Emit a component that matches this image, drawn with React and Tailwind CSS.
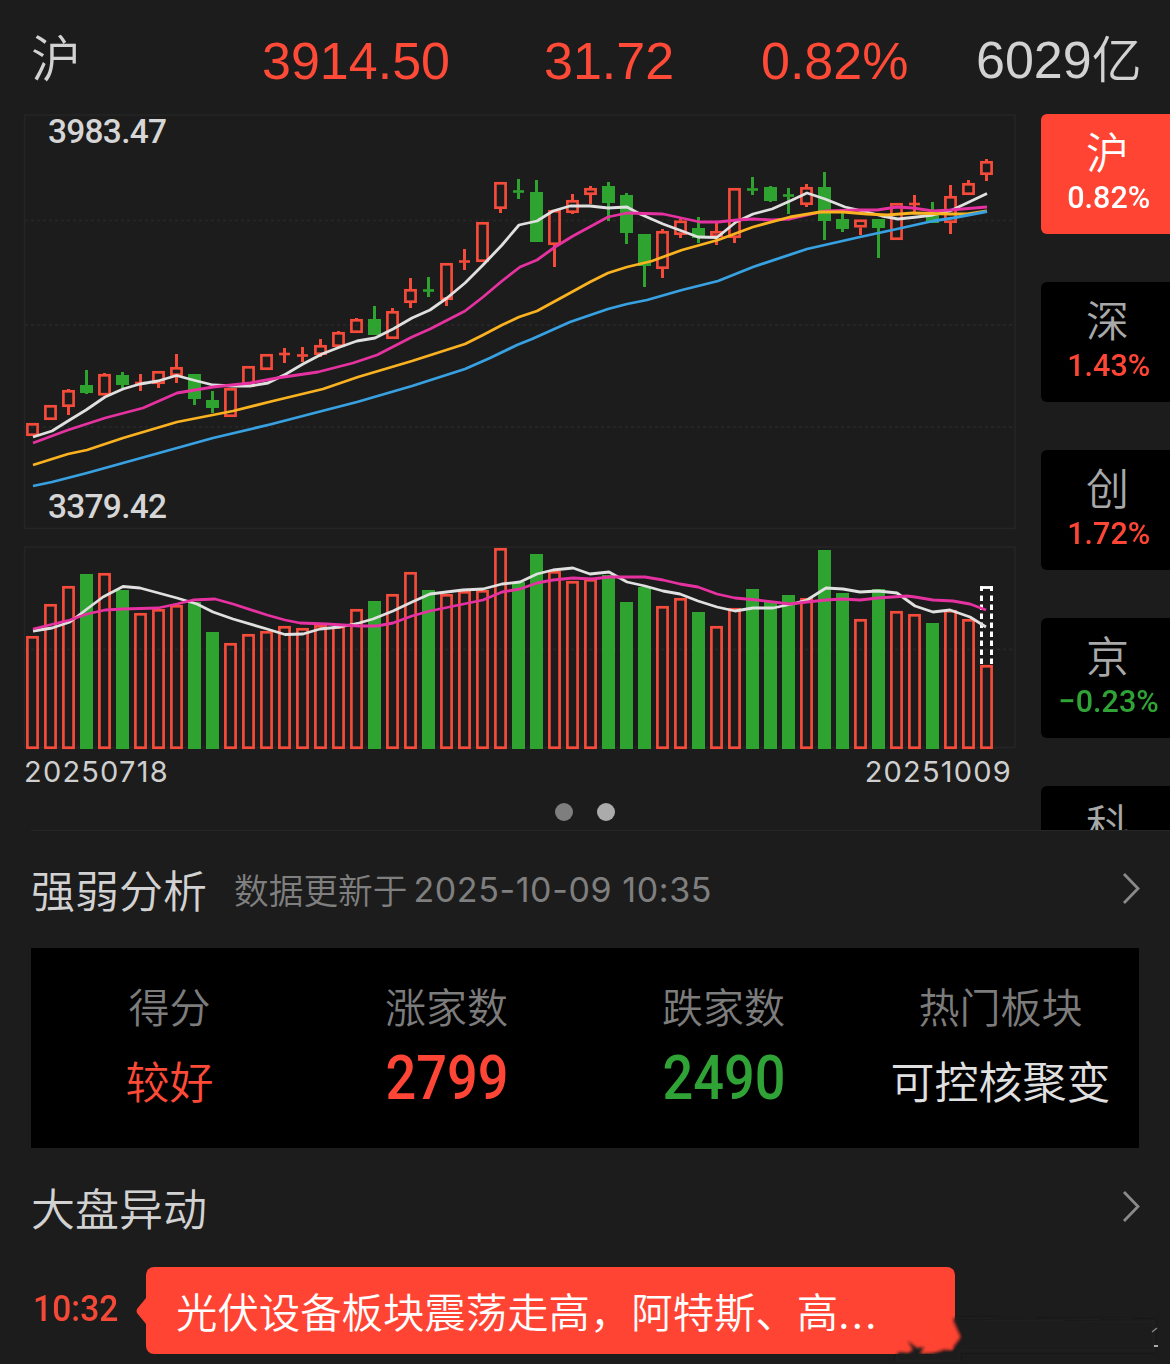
import { clsx } from "clsx";

const RED = "#f44b3a";
const GREEN = "#2fa32f";

// [up, high, body top, body bottom, low]
const candles = [
  [1, 423, 423, 436, 436],
  [1, 405, 405, 420, 420],
  [1, 389, 390, 407, 415],
  [0, 370, 385, 393, 394],
  [1, 373, 374, 395.5, 395.5],
  [0, 372, 375, 385, 388],
  [1, 374, 382, 384, 391],
  [1, 371, 371, 384, 388],
  [1, 354, 367, 376, 383],
  [0, 374, 374, 399, 405],
  [0, 391, 400, 408, 413],
  [1, 388, 388, 417, 417],
  [1, 366, 366, 387, 387],
  [1, 354, 354, 370, 370],
  [1, 348, 353, 355, 363],
  [1, 347, 354.5, 356.5, 362],
  [1, 339, 345, 355, 357],
  [1, 331, 332, 347, 347],
  [1, 318, 319, 333, 333],
  [0, 306, 319, 335, 335],
  [1, 308, 311, 339, 339],
  [1, 278, 289, 303, 308],
  [0, 277, 289.5, 291.5, 297],
  [1, 263, 263, 300, 306],
  [1, 249, 260.5, 262.5, 270],
  [1, 222, 222, 262, 262],
  [1, 182, 182, 209, 213],
  [0, 179, 190.5, 192.5, 199],
  [0, 180, 192, 242, 242],
  [1, 210, 210, 245, 267],
  [1, 194, 200, 213, 214],
  [1, 186, 188, 195, 204],
  [0, 182, 186, 203, 221],
  [0, 193, 195, 233, 244],
  [0, 234, 234, 266, 287],
  [1, 229, 231, 269, 278],
  [1, 219, 220.5, 235, 238],
  [0, 217, 228, 238, 243],
  [1, 221.5, 231, 237, 245],
  [1, 188, 188, 238, 243],
  [0, 177, 188.5, 190.5, 195],
  [0, 186, 187, 201, 202],
  [0, 188, 194.5, 196.5, 214],
  [1, 184, 187, 205, 207],
  [0, 172, 187, 221, 240],
  [0, 213, 219, 229, 232],
  [1, 219.5, 219.5, 227.5, 235],
  [0, 219, 219, 228, 258],
  [1, 203, 203, 240, 240],
  [1, 195, 203, 205, 212],
  [0, 202, 215, 223, 223],
  [1, 185, 196, 223, 234],
  [1, 180, 183, 195, 195],
  [1, 159, 161, 175, 181],
];

const volumes = [
  636, 604, 586, 574, 573, 590, 613, 609, 605, 602, 632, 643, 634, 631, 626,
  628, 625, 626, 609, 601, 594, 572, 590, 594, 591, 590, 548, 582, 554, 571,
  581, 579, 575, 602, 587, 606, 598, 612, 626, 608, 589, 601, 595, 598, 550,
  593, 619, 589, 611, 614, 623, 610, 619, 665,
];

const lines = [
  {
    color: "#e0e0e0",
    points:
      "33,437 52,431 68,421 86,410 105,397 123,389 140,384 158,381 176.5,375.5 193,380 213,385 233,386 250,386 268,383 286,374 303,364 322,354 340,347 357,341 375,338 393,329 412,318 430,310 447,298 465,283 483,265 502,245 519,225 537,221 553,211 570,206 590,206 608,208 627,207 640,214 663,224 682,231 698,237 717,237.5 736,222 753,214 772,209 790,201 807,193 825,199 845,207 867,212 882,216 898,219 917,217 933,215 950,211 967,203 987,193.5",
  },
  {
    color: "#e632a0",
    points:
      "33,443 68,430 105,418 143,408 177,393 213,387 250,383 277,378 318,372 353,363 377,355 412,337 430,329 465,311 483,297 502,281 520,267 537,260 555,247 573,236 608,217 627,213 663,214 700,222 718,222 737,220 753,219 772,220 790,219 825,211 860,210 877,210 897,207 913,208 933,211 950,210 987,207",
  },
  {
    color: "#fbb220",
    points:
      "33,465 68,454 87,450 123,438 177,422 233,411 273,401 323,389 358,377 412,361 465,344 483,335 502,325 519,317 537,311 570,293 590,282 608,273 627,267 652,261 682,250 718,240 753,227 790,217 820,212 843,212 867,214 887,215 913,213 950,214 967,214 987,211",
  },
  {
    color: "#38a1e2",
    points:
      "33,486 52,482 87,473 123,463 177,448 213,438 270,424.5 322,411 357,402 412,386 465,369 490,358 517,345 532,339 570,322 608,309 627,304 647,300 682,290 718,281 753,267 807,249 860,237 897,229 933,221 953,218 987,211.5",
  },
  {
    color: "#e0e0e0",
    points:
      "33,631 52,628 70,622 87,609 103,597 123,586.5 140,588 177,598 197,604 213,612 233,619 267,629 285,634.5 303,634 320,629 340,627 359,623 373,619 393,611 412,602 430,594 463,590 483,589 502,584 520,582 537,574 553,570 573,568 590,574 609,572 627,582 645,586 663,591 680,594 698,601 717,607 735,611 753,608 773,608 792,604 807,600 826,588 843,589 860,592 878,591 897,593 915,606 933,612 950,610 970,617 986,627",
  },
  {
    color: "#e632a0",
    points:
      "33,629 70,620 87,614 105,610 123,609 158,608 177,604 193,600 215,599 233,604 267,615 285,620 300,623 327,624 359,626 377,626 393,623 412,616 430,611 483,600 502,592 520,589 537,583 553,580 573,578 592,579 609,577 645,577 663,580 680,584 698,587 717,594 735,598 757,600 790,604 807,602 826,600 843,599 860,600 878,598 907,596 915,597 933,600 953,601 970,604 986,610",
  },
];

const tabs = [
  { name: "沪", change: "0.82%", color: "text-white", active: true },
  { name: "深", change: "1.43%", color: "text-[#ff4535]" },
  { name: "创", change: "1.72%", color: "text-[#ff4535]" },
  { name: "京", change: "−0.23%", color: "text-[#2fa336]" },
  { name: "科" },
];

const centerX = (i) => 32.5 + i * 18;

const Candle = ({ data, x }) => {
  const [up, high, top, bottom, low] = data;
  const color = up ? RED : GREEN;
  const height = bottom - top;
  const hollow = up && height > 4;

  return (
    <g>
      <rect x={x - 1.5} y={high} width="3" height={top - high} fill={color} />
      <rect x={x - 1.5} y={bottom} width="3" height={low - bottom} fill={color} />
      {hollow ? (
        <rect
          x={x - 5.1}
          y={top + 1.3}
          width="10.2"
          height={height - 2.6}
          fill="none"
          stroke={color}
          strokeWidth="2.7"
        />
      ) : (
        <rect
          x={height > 4 ? x - 6.5 : x - 5.5}
          y={height > 4 ? top : top - 0.3}
          width={height > 4 ? 13 : 11}
          height={height > 4 ? height : height + 0.6}
          fill={color}
        />
      )}
    </g>
  );
};

const Chart = () => (
  <svg className="block overflow-visible" width="1030" height="640" viewBox="0 114 1030 640">
    <g fill="none" stroke="#252525" strokeWidth="1.5">
      <rect x="24.5" y="115" width="990.5" height="413.5" />
      <rect x="24.5" y="547" width="990.5" height="200.5" />
      <path
        d="M25 220.5H1015M25 325H1015M25 427H1015M25 649.5H1015"
        strokeWidth="2"
        strokeDasharray="3 3"
      />
    </g>

    {candles.map((data, i) => (
      <Candle key={i} data={data} x={centerX(i)} />
    ))}

    {volumes.map((top, i) =>
      candles[i][0] ? (
        <rect
          key={i}
          x={centerX(i) - 5.1}
          y={top + 1.3}
          width="10.2"
          height={749 - top - 2.6}
          fill="none"
          stroke={RED}
          strokeWidth="2.7"
        />
      ) : (
        <rect key={i} x={centerX(i) - 6.5} y={top} width="13" height={749 - top} fill={GREEN} />
      )
    )}

    {/* Estimated volume of the running day */}
    <g fill="none" stroke="#ffffff" strokeWidth="3">
      <path d="M981.5 591V586.2M991.5 591V586.2" />
      <path d="M980 587.5H993" strokeWidth="2.8" />
      <path d="M981.5 595.5V664M991.5 595.5V664" strokeDasharray="5.5 3.5" />
    </g>

    {lines.map((line, i) => (
      <polyline
        key={i}
        points={line.points}
        fill="none"
        stroke={line.color}
        strokeWidth="2.8"
        strokeLinejoin="round"
      />
    ))}

    <g fill="#d6d6d6" className="font-['Roboto',sans-serif] text-[33.5px] font-medium">
      <text x="48" y="143" textLength="119">3983.47</text>
      <text x="48" y="518" textLength="119">3379.42</text>
    </g>
  </svg>
);

const Chevron = () => (
  <svg width="22" height="36" viewBox="0 0 22 36" fill="none">
    <path d="M4 3L18 17.5L4 32" stroke="#8a8a8a" strokeWidth="2.8" />
  </svg>
);

const SectionTitle = ({ title, note }) => (
  <div className="flex items-center pl-[31px] pr-[28px]">
    <h2 className="text-[44px] leading-[60px] text-[#d2d2d2]">{title}</h2>
    {note}
    <span className="ml-auto">
      <Chevron />
    </span>
  </div>
);

const Stat = ({ label, children }) => (
  <div className="flex flex-col items-center">
    <span className="text-[41px] leading-[60px] text-[#7c7c7c]">{label}</span>
    <span className="mt-[10px] flex h-[70px] items-center">{children}</span>
  </div>
);

const App = () => {
  return (
    <div className="h-[1364px] w-[1170px] overflow-hidden bg-[#1c1c1c] font-['Noto_Sans_CJK_SC',sans-serif] font-[350] whitespace-nowrap">
      {/* Index summary */}
      <header className="flex h-[114px] items-center pl-[31px] font-['Liberation_Sans','Noto_Sans_CJK_SC',sans-serif] text-[52px] leading-[60px] text-[#ff4a38]">
        <span className="w-[231px] pt-[6px] text-[50px] text-[#d2d2d2]">沪</span>
        <span className="w-[282px] pt-[7px]">3914.50</span>
        <span className="w-[217px] pt-[7px]">31.72</span>
        <span className="w-[215px] pt-[7px]">0.82%</span>
        <span className="pt-[7px] text-[#d2d2d2]">
          6029<span className="text-[50px]">亿</span>
        </span>
      </header>

      {/* Chart and market tabs */}
      <section className="flex h-[716px] justify-between overflow-hidden">
        <div className="flex w-[1030px] flex-col">
          <Chart />
          <div className="flex justify-between pl-[24px] pr-[18px] font-['Inter',sans-serif] text-[29px] leading-[36px] font-normal tracking-[1.2px] text-[#cfcfcf]">
            <span>20250718</span>
            <span>20251009</span>
          </div>
          <div className="mt-[13px] flex gap-6 pl-[555px]">
            <span className="size-[18px] rounded-full bg-[#7e7e7e]" />
            <span className="size-[18px] rounded-full bg-[#ababab]" />
          </div>
        </div>

        <nav className="flex w-[129px] flex-col gap-12">
          {tabs.map((tab) => (
            <button
              key={tab.name}
              className={clsx(
                "flex h-[120px] shrink-0 flex-col items-center rounded-l-md pl-[4px] pt-[8px]",
                tab.active ? "bg-[#ff4433] text-white" : "bg-black text-[#a8a8a8]"
              )}
            >
              <span className="text-[43px] leading-[56px]">{tab.name}</span>
              {tab.change && (
                <span
                  className={clsx(
                    "scale-x-[0.97] pl-[2px] font-['Roboto',sans-serif] text-[31.5px] leading-[40px] font-medium",
                    tab.color
                  )}
                >
                  {tab.change}
                </span>
              )}
            </button>
          ))}
        </nav>
      </section>

      <div className="ml-[31px] h-px bg-[#262626]" />

      {/* Strength analysis */}
      <section className="pt-[28px]">
        <SectionTitle
          title="强弱分析"
          note={
            <span className="ml-[27px] flex items-center text-[34.7px] leading-[50px] text-[#7f7f7f]">
              数据更新于
              <span className="ml-[6px] pt-[2px] font-['Inter',sans-serif] text-[34px] font-normal tracking-[0.6px]">
                2025-10-09 10:35
              </span>
            </span>
          }
        />
        <div className="mx-[31px] mt-[29px] grid h-[200px] grid-cols-4 bg-black pt-[27px]">
          <Stat label="得分">
            <span className="text-[44px] text-[#ff4a38]">较好</span>
          </Stat>
          <Stat label="涨家数">
            <span className="scale-x-[0.88] pb-[3px] font-['Roboto',sans-serif] text-[61.5px] font-medium text-[#ff4535]">
              2799
            </span>
          </Stat>
          <Stat label="跌家数">
            <span className="scale-x-[0.88] pb-[3px] font-['Roboto',sans-serif] text-[61.5px] font-medium text-[#2fa336]">
              2490
            </span>
          </Stat>
          <Stat label="热门板块">
            <span className="text-[44px] text-[#e0e0e0]">可控核聚变</span>
          </Stat>
        </div>
      </section>

      {/* Market moves */}
      <section className="pt-[29px]">
        <SectionTitle title="大盘异动" />
        <div className="mt-[30px] flex items-center">
          <time className="w-[101px] origin-left scale-x-[0.92] pb-[3px] pl-[36px] font-['Roboto',sans-serif] text-[36.5px] font-medium text-[#f54937]">
            10:32
          </time>
          <svg className="ml-[35px]" width="10" height="26" viewBox="0 0 10 26">
            <path d="M10 0L1 11Q0 13 1 15L10 26Z" fill="#ff4433" />
          </svg>
          <div className="relative flex h-[87px] w-[809px] items-center rounded-lg bg-[#ff4433] pl-[30px] text-[41.4px] text-white">
            光伏设备板块震荡走高，阿特斯、高
            <span className="tracking-[2.4px]">...</span>
            <svg
              className="absolute top-[43px] left-[744px]"
              width="280"
              height="52"
              viewBox="890 1310 280 52"
            >
              <defs>
                <filter id="smudge" x="-20%" y="-20%" width="140%" height="140%">
                  <feGaussianBlur stdDeviation="1.5" />
                </filter>
              </defs>
              <g filter="url(#smudge)">
                <path d="M953 1318L1155 1320V1352H953Z" fill="#1a1a1a" />
                <path d="M940 1318L952 1319L960 1337L952 1348L940 1352L930 1340Z" fill="#ff4433" />
                <path
                  d="M896 1356L899 1352L908 1353L913 1350L908 1341L917 1348L924 1347L920 1354L934 1353L944 1349L953 1350L960 1345V1362H896Z"
                  fill="#1c1c1c"
                />
              </g>
              <path d="M1152 1332L1157 1328" stroke="#888888" strokeWidth="1.5" />
              <path d="M1154 1346H1158" stroke="#aaaaaa" strokeWidth="2" />
            </svg>
          </div>
        </div>
      </section>
    </div>
  );
};

export default App;
